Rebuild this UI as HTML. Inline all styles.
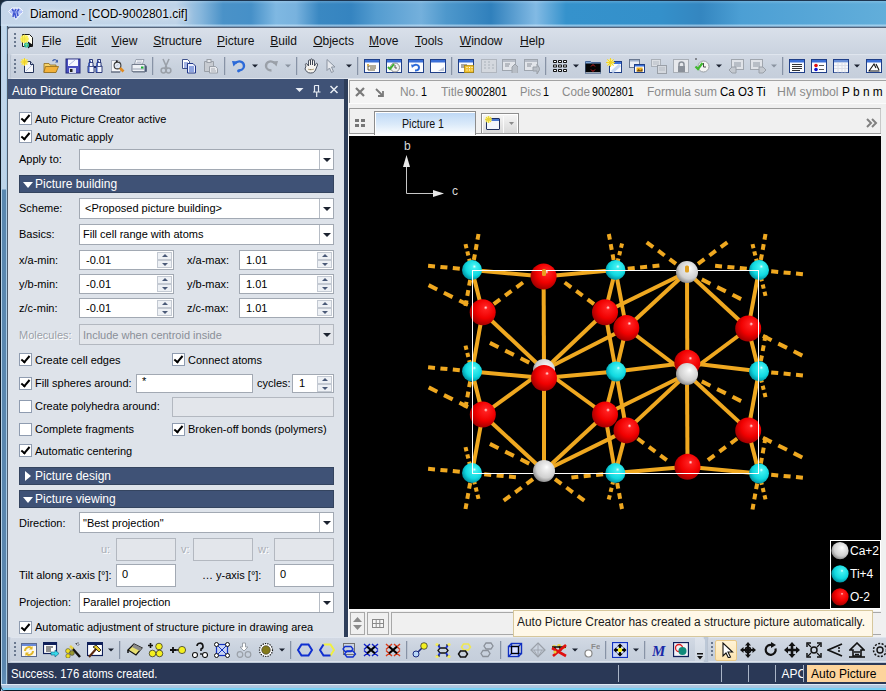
<!DOCTYPE html>
<html><head><meta charset="utf-8">
<style>
*{box-sizing:border-box;margin:0;padding:0}
html,body{width:886px;height:691px;overflow:hidden;background:#1a2a3a}
body{position:relative;font-family:"Liberation Sans",sans-serif;font-size:11px;color:#000}
.a{position:absolute}
.t{position:absolute;white-space:pre;line-height:1}
#title{left:0;top:0;width:886px;height:27px;border-top:1px solid #1d3550;border-left:1px solid #27415c;border-top-left-radius:7px;background:linear-gradient(180deg,rgba(255,255,255,0.18) 0,rgba(255,255,255,0) 3px,rgba(255,255,255,0) 23px,rgba(220,240,255,0.5) 24px,rgba(200,225,245,0.6) 25px,rgba(90,110,140,0.8) 26px),linear-gradient(90deg,#c6d7ea 0px,#bed3e8 175px,#86b6dc 200px,#4a92c8 222px,#4690c8 250px,#7fb8e2 275px,#78b2de 295px,#3a88c2 318px,#3584c0 350px,#549cd0 375px,#74b0dc 420px,#4e98cc 445px,#3080bc 490px,#82bae4 535px,#3592cc 565px,#3490ca 660px,#3486c0 700px,#4c9fd4 740px,#62aeda 886px)}
#frameL{left:0;top:26px;width:8px;height:665px;background:linear-gradient(90deg,#0c1622 0,#0c1622 1px,#b9d3e8 1px,#b9d3e8 2px,transparent 2px,transparent 6px,#a9cbe6 6px,#a9cbe6 7px,#4d5b6c 7px,#4d5b6c 8px),linear-gradient(180deg,#c3d8ec 0,#bcd3e8 163px,#5a88b0 164px,#5a86ae 640px,#6c9cc4 691px)}
#frameB{left:0;top:684px;width:886px;height:7px;background:linear-gradient(180deg,#dfeaf6 0,#dfeaf6 1px,#b4c8de 1px,#a4c4e2 4px,#78d0f4 4px,#78d0f4 6px,#0a1a26 6px);border-bottom-left-radius:6px;border-left:1px solid #0c1622}
#menubar{left:7px;top:27px;width:879px;height:27px;background:linear-gradient(180deg,#d9e0ea,#cad3df);border-top:1px solid #56667c;border-left:1px solid #56667c;border-top-left-radius:3px}
#tbarrow{left:8px;top:53px;width:878px;height:26px;background:#c9d2de}
.tb{position:absolute;border:1px solid #b9c3d1;border-top-color:#dfe5ee;border-bottom-color:#dde3ec;border-radius:3px;background:linear-gradient(180deg,#d2d9e4,#c9d2de 50%,#c5cedb)}
.grip{position:absolute;width:2px;height:14px;background:linear-gradient(180deg,#6a788e 2px,transparent 2px) 0 0/2px 4px}
.sep{position:absolute;width:1px;height:18px;background:#8793a6;border-right:1px solid rgba(240,244,250,0.5);box-sizing:content-box}
#panel{left:8px;top:79px;width:336px;height:558px;background:#dee3ea}
#phead{left:8px;top:79px;width:336px;height:20px;background:#3f5276}
.sh{position:absolute;left:19px;width:315px;height:18px;background:#3f5276;border:1px solid #34445f;color:#fff;font-size:12px}
.sh .tri{position:absolute;left:3px;top:6px;border-left:5px solid transparent;border-right:5px solid transparent;border-top:6px solid #fff}
.sh .tri.r{left:5px;top:3px;border-top:5px solid transparent;border-bottom:5px solid transparent;border-left:6px solid #fff;border-right:none}
.cb{position:absolute;width:13px;height:13px;background:#fff;border:1px solid #8f9cb0}
.cb.on::after{content:"";position:absolute;left:3px;top:0px;width:3px;height:7px;border:solid #000;border-width:0 2px 2px 0;transform:rotate(40deg)}
.ed{position:absolute;background:#fff;border:1px solid #a2a9b3}
.ed.dis{background:#e3e6eb;border-color:#b3b8c0}
.combo .btn{position:absolute;right:0;top:0;width:14px;height:100%;border-left:1px solid #b6bcc5}
.combo .btn::after{content:"";position:absolute;left:3px;top:8px;border-left:4px solid transparent;border-right:4px solid transparent;border-top:4px solid #1c2330}
.spin .btn{position:absolute;right:1px;top:1px;width:15px;height:16px}
.spin .btn i{position:absolute;left:0;width:15px;height:8px;background:#eef1f5;border:1px solid #c3c9d2}
.spin .btn i::after{content:"";position:absolute;left:4px;border-left:3px solid transparent;border-right:3px solid transparent}
.spin .btn i.u{top:0}.spin .btn i.u::after{top:1px;border-bottom:3px solid #4a5a78}
.spin .btn i.d{top:8px}.spin .btn i.d::after{top:2px;border-top:3px solid #4a5a78}
#split{left:344px;top:79px;width:4px;height:558px;background:#2e3e5a}
#right{left:348px;top:79px;width:538px;height:558px;background:#f0f0f0}
#canvas{left:349px;top:136px;width:532px;height:473px;background:#000}
#status{left:8px;top:663px;width:878px;height:21px;background:#2a3856;color:#fff}
.ss{position:absolute;top:2px;width:1px;height:17px;background:#9aa6b8}
</style></head><body>
<div id="title" class="a"></div>
<div id="frameL" class="a"></div>
<div id="frameB" class="a"></div>
<div id="menubar" class="a"></div>
<div id="tbarrow" class="a"></div>
<div id="panel" class="a"></div>
<div id="phead" class="a"></div>
<div id="split" class="a"></div>
<div id="right" class="a"></div>
<div id="canvas" class="a"></div>
<div id="status" class="a"></div>
<svg class="a" style="left:0;top:0" width="886" height="691" viewBox="0 0 886 691">
<defs><radialGradient id="gO" cx="0.58" cy="0.4" r="0.62" fx="0.62" fy="0.32"><stop offset="0" stop-color="#fff0f0"/><stop offset="0.12" stop-color="#ff2020"/><stop offset="0.6" stop-color="#f00000"/><stop offset="1" stop-color="#a00000"/></radialGradient><radialGradient id="gT" cx="0.58" cy="0.4" r="0.62" fx="0.62" fy="0.32"><stop offset="0" stop-color="#e8ffff"/><stop offset="0.15" stop-color="#40f0f0"/><stop offset="0.65" stop-color="#10d8e0"/><stop offset="1" stop-color="#0090a0"/></radialGradient><radialGradient id="gC" cx="0.58" cy="0.4" r="0.62" fx="0.62" fy="0.32"><stop offset="0" stop-color="#ffffff"/><stop offset="0.2" stop-color="#eeeeee"/><stop offset="0.7" stop-color="#d0d0d0"/><stop offset="1" stop-color="#8a8a8a"/></radialGradient><radialGradient id="gO2" href="#gO"/><radialGradient id="gT2" href="#gT"/><radialGradient id="gC2" href="#gC"/></defs><g stroke="#efa820" stroke-width="4"><line x1="472" y1="270" x2="543.6" y2="276.5"/><line x1="472" y1="270" x2="482.7" y2="312.2"/><line x1="615.5" y1="270" x2="626.3" y2="328"/><line x1="615.5" y1="270" x2="543.6" y2="276.5"/><line x1="615.5" y1="270" x2="605" y2="312.2"/><line x1="759" y1="270" x2="748.2" y2="328.5"/><line x1="472" y1="371.5" x2="544" y2="378"/><line x1="472" y1="371.5" x2="482.8" y2="414.5"/><line x1="472" y1="371.5" x2="482.7" y2="312.2"/><line x1="616" y1="371.5" x2="687.3" y2="362.8"/><line x1="616" y1="371.5" x2="626.3" y2="328"/><line x1="616" y1="371.5" x2="626.5" y2="430.4"/><line x1="616" y1="371.5" x2="544" y2="378"/><line x1="616" y1="371.5" x2="605" y2="414.5"/><line x1="616" y1="371.5" x2="605" y2="312.2"/><line x1="759" y1="371.2" x2="687.3" y2="362.8"/><line x1="759" y1="371.2" x2="748.2" y2="328.5"/><line x1="759" y1="371.2" x2="748.2" y2="430.4"/><line x1="472" y1="473" x2="482.8" y2="414.5"/><line x1="615.3" y1="473" x2="687.5" y2="466.8"/><line x1="615.3" y1="473" x2="626.5" y2="430.4"/><line x1="615.3" y1="473" x2="605" y2="414.5"/><line x1="759" y1="473.5" x2="687.5" y2="466.8"/><line x1="759" y1="473.5" x2="748.2" y2="430.4"/><line x1="687" y1="272" x2="687.3" y2="362.8"/><line x1="687" y1="272" x2="748.2" y2="328.5"/><line x1="687" y1="272" x2="626.3" y2="328"/><line x1="687" y1="272" x2="605" y2="312.2"/><line x1="544" y1="370" x2="544" y2="378"/><line x1="544" y1="370" x2="543.6" y2="276.5"/><line x1="544" y1="370" x2="482.7" y2="312.2"/><line x1="544" y1="370" x2="605" y2="312.2"/><line x1="544" y1="370" x2="626.3" y2="328"/><line x1="544" y1="370" x2="482.8" y2="414.5"/><line x1="544" y1="370" x2="605" y2="414.5"/><line x1="687" y1="374" x2="687.3" y2="362.8"/><line x1="687" y1="374" x2="687.5" y2="466.8"/><line x1="687" y1="374" x2="748.2" y2="430.4"/><line x1="687" y1="374" x2="626.5" y2="430.4"/><line x1="687" y1="374" x2="605" y2="414.5"/><line x1="687" y1="374" x2="748.2" y2="328.5"/><line x1="687" y1="374" x2="626.3" y2="328"/><line x1="544" y1="471" x2="544" y2="378"/><line x1="544" y1="471" x2="482.8" y2="414.5"/><line x1="544" y1="471" x2="605" y2="414.5"/><line x1="544" y1="471" x2="626.5" y2="430.4"/></g><g stroke="#efa820" stroke-width="4"><line x1="477.5" y1="239.7" x2="478.5" y2="234.0"/><line x1="475.7" y1="249.8" x2="476.7" y2="244.1"/><line x1="473.8" y1="260.0" x2="474.9" y2="254.3"/><line x1="435.0" y1="266.4" x2="428.1" y2="265.7"/><line x1="447.4" y1="267.6" x2="440.4" y2="266.9"/><line x1="459.8" y1="268.8" x2="452.8" y2="268.1"/><line x1="466.5" y1="248.2" x2="465.5" y2="244.1"/><line x1="468.3" y1="255.5" x2="467.3" y2="251.4"/><line x1="470.2" y1="262.8" x2="469.1" y2="258.7"/><line x1="466.5" y1="300.3" x2="465.5" y2="306.0"/><line x1="468.3" y1="290.2" x2="467.3" y2="295.9"/><line x1="470.2" y1="280.0" x2="469.1" y2="285.7"/><line x1="652.5" y1="266.2" x2="659.4" y2="265.4"/><line x1="640.1" y1="267.4" x2="647.1" y2="266.7"/><line x1="627.7" y1="268.7" x2="634.7" y2="268.0"/><line x1="621.0" y1="247.8" x2="622.1" y2="243.6"/><line x1="619.2" y1="255.2" x2="620.2" y2="251.1"/><line x1="617.3" y1="262.7" x2="618.4" y2="258.5"/><line x1="609.9" y1="239.7" x2="608.8" y2="234.0"/><line x1="611.7" y1="249.8" x2="610.7" y2="244.1"/><line x1="613.6" y1="260.0" x2="612.6" y2="254.3"/><line x1="796.0" y1="273.6" x2="802.9" y2="274.3"/><line x1="783.6" y1="272.4" x2="790.6" y2="273.1"/><line x1="771.2" y1="271.2" x2="778.2" y2="271.9"/><line x1="764.5" y1="291.8" x2="765.5" y2="295.9"/><line x1="762.7" y1="284.5" x2="763.7" y2="288.6"/><line x1="760.8" y1="277.2" x2="761.9" y2="281.3"/><line x1="764.5" y1="239.7" x2="765.5" y2="234.0"/><line x1="762.7" y1="249.8" x2="763.7" y2="244.1"/><line x1="760.8" y1="260.0" x2="761.9" y2="254.3"/><line x1="722.0" y1="266.4" x2="715.1" y2="265.7"/><line x1="734.4" y1="267.6" x2="727.4" y2="266.9"/><line x1="746.8" y1="268.8" x2="739.8" y2="268.1"/><line x1="753.5" y1="248.2" x2="752.5" y2="244.1"/><line x1="755.3" y1="255.5" x2="754.3" y2="251.4"/><line x1="757.2" y1="262.8" x2="756.1" y2="258.7"/><line x1="435.0" y1="367.9" x2="428.1" y2="367.2"/><line x1="447.4" y1="369.1" x2="440.4" y2="368.4"/><line x1="459.8" y1="370.3" x2="452.8" y2="369.6"/><line x1="466.5" y1="349.7" x2="465.5" y2="345.6"/><line x1="468.3" y1="357.0" x2="467.3" y2="352.9"/><line x1="470.2" y1="364.3" x2="469.1" y2="360.2"/><line x1="466.5" y1="401.8" x2="465.5" y2="407.5"/><line x1="468.3" y1="391.7" x2="467.3" y2="397.4"/><line x1="470.2" y1="381.5" x2="469.1" y2="387.2"/><line x1="796.0" y1="374.8" x2="802.9" y2="375.5"/><line x1="783.6" y1="373.6" x2="790.6" y2="374.3"/><line x1="771.2" y1="372.4" x2="778.2" y2="373.1"/><line x1="764.5" y1="393.0" x2="765.5" y2="397.1"/><line x1="762.7" y1="385.7" x2="763.7" y2="389.8"/><line x1="760.8" y1="378.4" x2="761.9" y2="382.5"/><line x1="764.5" y1="340.9" x2="765.5" y2="335.2"/><line x1="762.7" y1="351.0" x2="763.7" y2="345.3"/><line x1="760.8" y1="361.2" x2="761.9" y2="355.5"/><line x1="509.0" y1="476.6" x2="515.9" y2="477.3"/><line x1="496.6" y1="475.4" x2="503.6" y2="476.1"/><line x1="484.2" y1="474.2" x2="491.2" y2="474.9"/><line x1="477.5" y1="494.8" x2="478.5" y2="498.9"/><line x1="475.7" y1="487.5" x2="476.7" y2="491.6"/><line x1="473.8" y1="480.2" x2="474.9" y2="484.3"/><line x1="435.0" y1="469.4" x2="428.1" y2="468.7"/><line x1="447.4" y1="470.6" x2="440.4" y2="469.9"/><line x1="459.8" y1="471.8" x2="452.8" y2="471.1"/><line x1="466.5" y1="451.2" x2="465.5" y2="447.1"/><line x1="468.3" y1="458.5" x2="467.3" y2="454.4"/><line x1="470.2" y1="465.8" x2="469.1" y2="461.7"/><line x1="466.5" y1="503.3" x2="465.5" y2="509.0"/><line x1="468.3" y1="493.2" x2="467.3" y2="498.9"/><line x1="470.2" y1="483.0" x2="469.1" y2="488.7"/><line x1="620.9" y1="503.3" x2="622.0" y2="509.0"/><line x1="619.1" y1="493.2" x2="620.1" y2="498.9"/><line x1="617.2" y1="483.0" x2="618.2" y2="488.7"/><line x1="578.3" y1="476.8" x2="571.4" y2="477.6"/><line x1="590.7" y1="475.6" x2="583.7" y2="476.3"/><line x1="603.1" y1="474.3" x2="596.1" y2="475.0"/><line x1="609.8" y1="495.2" x2="608.7" y2="499.4"/><line x1="611.6" y1="487.8" x2="610.6" y2="491.9"/><line x1="613.5" y1="480.3" x2="612.4" y2="484.5"/><line x1="796.0" y1="477.1" x2="802.9" y2="477.8"/><line x1="783.6" y1="475.9" x2="790.6" y2="476.6"/><line x1="771.2" y1="474.7" x2="778.2" y2="475.4"/><line x1="764.5" y1="495.3" x2="765.5" y2="499.4"/><line x1="762.7" y1="488.0" x2="763.7" y2="492.1"/><line x1="760.8" y1="480.7" x2="761.9" y2="484.8"/><line x1="764.5" y1="443.2" x2="765.5" y2="437.5"/><line x1="762.7" y1="453.3" x2="763.7" y2="447.6"/><line x1="760.8" y1="463.5" x2="761.9" y2="457.8"/><line x1="753.5" y1="503.8" x2="752.5" y2="509.5"/><line x1="755.3" y1="493.7" x2="754.3" y2="499.4"/><line x1="757.2" y1="483.5" x2="756.1" y2="489.2"/><line x1="687.0" y1="267.6" x2="687.0" y2="266.7"/><line x1="687.0" y1="269.1" x2="687.0" y2="268.2"/><line x1="687.0" y1="270.6" x2="687.0" y2="269.7"/><line x1="732.5" y1="294.7" x2="741.1" y2="299.1"/><line x1="717.1" y1="287.1" x2="725.8" y2="291.4"/><line x1="701.8" y1="279.4" x2="710.4" y2="283.7"/><line x1="720.8" y1="247.1" x2="727.3" y2="242.3"/><line x1="709.4" y1="255.5" x2="715.8" y2="250.7"/><line x1="698.0" y1="263.9" x2="704.4" y2="259.1"/><line x1="653.2" y1="247.1" x2="646.7" y2="242.3"/><line x1="664.6" y1="255.5" x2="658.2" y2="250.7"/><line x1="676.0" y1="263.9" x2="669.6" y2="259.1"/><line x1="498.5" y1="347.3" x2="489.9" y2="342.9"/><line x1="513.9" y1="354.9" x2="505.2" y2="350.6"/><line x1="529.2" y1="362.6" x2="520.6" y2="358.3"/><line x1="732.5" y1="396.7" x2="741.1" y2="401.1"/><line x1="717.1" y1="389.1" x2="725.8" y2="393.4"/><line x1="701.8" y1="381.4" x2="710.4" y2="385.7"/><line x1="544.0" y1="475.4" x2="544.0" y2="476.3"/><line x1="544.0" y1="473.9" x2="544.0" y2="474.8"/><line x1="544.0" y1="472.4" x2="544.0" y2="473.3"/><line x1="498.5" y1="448.3" x2="489.9" y2="443.9"/><line x1="513.9" y1="455.9" x2="505.2" y2="451.6"/><line x1="529.2" y1="463.6" x2="520.6" y2="459.3"/><line x1="510.2" y1="495.9" x2="503.7" y2="500.7"/><line x1="521.6" y1="487.5" x2="515.2" y2="492.3"/><line x1="533.0" y1="479.1" x2="526.6" y2="483.9"/><line x1="577.8" y1="495.9" x2="584.3" y2="500.7"/><line x1="566.4" y1="487.5" x2="572.8" y2="492.3"/><line x1="555.0" y1="479.1" x2="561.4" y2="483.9"/><line x1="543.6" y1="272.1" x2="543.6" y2="271.2"/><line x1="543.6" y1="273.6" x2="543.6" y2="272.7"/><line x1="543.6" y1="275.1" x2="543.6" y2="274.2"/><line x1="437.2" y1="289.5" x2="428.6" y2="285.1"/><line x1="452.6" y1="297.1" x2="443.9" y2="292.8"/><line x1="467.9" y1="304.8" x2="459.3" y2="300.5"/><line x1="516.5" y1="287.3" x2="523.0" y2="282.5"/><line x1="505.1" y1="295.7" x2="511.5" y2="290.9"/><line x1="493.7" y1="304.1" x2="500.1" y2="299.3"/><line x1="571.2" y1="287.3" x2="564.7" y2="282.5"/><line x1="582.6" y1="295.7" x2="576.2" y2="290.9"/><line x1="594.0" y1="304.1" x2="587.6" y2="299.3"/><line x1="793.7" y1="351.2" x2="802.3" y2="355.6"/><line x1="778.3" y1="343.6" x2="787.0" y2="347.9"/><line x1="763.0" y1="335.9" x2="771.6" y2="340.2"/><line x1="437.3" y1="391.8" x2="428.7" y2="387.4"/><line x1="452.7" y1="399.4" x2="444.0" y2="395.1"/><line x1="468.0" y1="407.1" x2="459.4" y2="402.8"/><line x1="660.3" y1="455.3" x2="666.8" y2="460.1"/><line x1="648.9" y1="446.9" x2="655.3" y2="451.7"/><line x1="637.5" y1="438.5" x2="643.9" y2="443.3"/><line x1="714.4" y1="455.3" x2="707.9" y2="460.1"/><line x1="725.8" y1="446.9" x2="719.4" y2="451.7"/><line x1="737.2" y1="438.5" x2="730.8" y2="443.3"/><line x1="793.7" y1="453.1" x2="802.3" y2="457.5"/><line x1="778.3" y1="445.5" x2="787.0" y2="449.8"/><line x1="763.0" y1="437.8" x2="771.6" y2="442.1"/><line x1="687.5" y1="471.2" x2="687.5" y2="472.1"/><line x1="687.5" y1="469.7" x2="687.5" y2="470.6"/><line x1="687.5" y1="468.2" x2="687.5" y2="469.1"/></g><circle cx="544" cy="370" r="11" fill="url(#gC)"/><circle cx="605" cy="312.2" r="13" fill="url(#gO)"/><circle cx="605" cy="414.5" r="13" fill="url(#gO)"/><circle cx="472" cy="270" r="10" fill="url(#gT)"/><circle cx="615.5" cy="270" r="10" fill="url(#gT)"/><circle cx="759" cy="270" r="10" fill="url(#gT)"/><circle cx="472" cy="371.5" r="10" fill="url(#gT)"/><circle cx="616" cy="371.5" r="10" fill="url(#gT)"/><circle cx="759" cy="371.2" r="10" fill="url(#gT)"/><circle cx="472" cy="473" r="10" fill="url(#gT)"/><circle cx="615.3" cy="473" r="10" fill="url(#gT)"/><circle cx="759" cy="473.5" r="10" fill="url(#gT)"/><circle cx="543.6" cy="276.5" r="13" fill="url(#gO)"/><circle cx="482.7" cy="312.2" r="13" fill="url(#gO)"/><circle cx="626.3" cy="328" r="13" fill="url(#gO)"/><circle cx="748.2" cy="328.5" r="13" fill="url(#gO)"/><circle cx="544" cy="378" r="13" fill="url(#gO)"/><circle cx="687.3" cy="362.8" r="13" fill="url(#gO)"/><circle cx="482.8" cy="414.5" r="13" fill="url(#gO)"/><circle cx="626.5" cy="430.4" r="13" fill="url(#gO)"/><circle cx="748.2" cy="430.4" r="13" fill="url(#gO)"/><circle cx="687.5" cy="466.8" r="13" fill="url(#gO)"/><rect x="472.5" y="270.5" width="286" height="203" fill="none" stroke="#ffffff" stroke-width="1"/><rect x="542" y="269" width="4" height="7" rx="1.5" fill="#e8a020"/><circle cx="687" cy="272" r="11" fill="url(#gC)"/><circle cx="687" cy="374" r="11" fill="url(#gC)"/><circle cx="544" cy="471" r="11" fill="url(#gC)"/><rect x="685" y="265.5" width="4" height="7" rx="1.5" fill="#e0a020"/>
</svg>
<svg class="a" style="left:390px;top:136px" width="80" height="64"><path d="M16.5 57.5V28M16.5 57.5H45" stroke="#c8c8c8" stroke-width="1" fill="none"/><path d="M13 31l3.5-12 3.5 12z" fill="#e8e8e8"/><path d="M43 54l11 3.5-11 3.5z" fill="#e8e8e8"/><text x="14" y="14" font-size="12" fill="#d8d8d8" font-family="Liberation Sans">b</text><text x="62" y="59" font-size="12" fill="#d8d8d8" font-family="Liberation Sans">c</text></svg>
<div class="t" style="left:12px;top:85px;font-size:12px;color:#fff;">Auto Picture Creator</div><svg class="a" style="left:290px;top:82px" width="54" height="16"><path d="M5.5 6h8l-4 4z" fill="#e8edf4"/><path d="M24.5 3.5h4v6M24.5 3.5v6M23 10h7.5M26.7 10v5" stroke="#e8edf4" stroke-width="1.2" fill="none"/><path d="M40.5 4l7 7M47.5 4l-7 7" stroke="#e8edf4" stroke-width="1.5"/></svg><div class="cb on" style="left:19px;top:112px"></div><div class="t" style="left:35px;top:114px;font-size:11px;color:#000;">Auto Picture Creator active</div><div class="cb on" style="left:19px;top:130px"></div><div class="t" style="left:35px;top:132px;font-size:11px;color:#000;">Automatic apply</div><div class="t" style="left:19px;top:154px;font-size:11px;color:#000;">Apply to:</div><div class="ed combo" style="left:79px;top:149px;width:255px;height:21px"><div class="btn"></div></div><div class="sh" style="top:175px"><i class="tri"></i></div><div class="t" style="left:35px;top:178px;font-size:12px;color:#fff;">Picture building</div><div class="t" style="left:19px;top:203px;font-size:11px;color:#000;">Scheme:</div><div class="ed combo" style="left:79px;top:198px;width:255px;height:21px"><div class="btn"></div></div><div class="t" style="left:85px;top:203px;font-size:11px;color:#000;">&lt;Proposed picture building&gt;</div><div class="t" style="left:19px;top:229px;font-size:11px;color:#000;">Basics:</div><div class="ed combo" style="left:79px;top:224px;width:255px;height:21px"><div class="btn"></div></div><div class="t" style="left:83px;top:229px;font-size:11px;color:#000;">Fill cell range with atoms</div><div class="t" style="left:19px;top:255px;font-size:11px;color:#000;">x/a-min:</div><div class="ed spin" style="left:79px;top:250px;width:95px;height:20px"><div class="btn"><i class="u"></i><i class="d"></i></div></div><div class="t" style="left:86px;top:255px;font-size:11px;color:#000;">-0.01</div><div class="t" style="left:187px;top:255px;font-size:11px;color:#000;">x/a-max:</div><div class="ed spin" style="left:239px;top:250px;width:95px;height:20px"><div class="btn"><i class="u"></i><i class="d"></i></div></div><div class="t" style="left:246px;top:255px;font-size:11px;color:#000;">1.01</div><div class="t" style="left:19px;top:279px;font-size:11px;color:#000;">y/b-min:</div><div class="ed spin" style="left:79px;top:274px;width:95px;height:20px"><div class="btn"><i class="u"></i><i class="d"></i></div></div><div class="t" style="left:86px;top:279px;font-size:11px;color:#000;">-0.01</div><div class="t" style="left:187px;top:279px;font-size:11px;color:#000;">y/b-max:</div><div class="ed spin" style="left:239px;top:274px;width:95px;height:20px"><div class="btn"><i class="u"></i><i class="d"></i></div></div><div class="t" style="left:246px;top:279px;font-size:11px;color:#000;">1.01</div><div class="t" style="left:19px;top:303px;font-size:11px;color:#000;">z/c-min:</div><div class="ed spin" style="left:79px;top:298px;width:95px;height:20px"><div class="btn"><i class="u"></i><i class="d"></i></div></div><div class="t" style="left:86px;top:303px;font-size:11px;color:#000;">-0.01</div><div class="t" style="left:187px;top:303px;font-size:11px;color:#000;">z/c-max:</div><div class="ed spin" style="left:239px;top:298px;width:95px;height:20px"><div class="btn"><i class="u"></i><i class="d"></i></div></div><div class="t" style="left:246px;top:303px;font-size:11px;color:#000;">1.01</div><div class="t" style="left:19px;top:330px;font-size:11px;color:#9aa0a8;text-shadow:1px 1px 0 #fff">Molecules:</div><div class="ed combo dis" style="left:79px;top:324px;width:255px;height:21px"><div class="btn"></div></div><div class="t" style="left:83px;top:330px;font-size:11px;color:#8a8f98;">Include when centroid inside</div><div class="cb on" style="left:19px;top:353px"></div><div class="t" style="left:35px;top:355px;font-size:11px;color:#000;">Create cell edges</div><div class="cb on" style="left:172px;top:353px"></div><div class="t" style="left:188px;top:355px;font-size:11px;color:#000;">Connect atoms</div><div class="cb on" style="left:19px;top:377px"></div><div class="t" style="left:35px;top:378px;font-size:11px;color:#000;">Fill spheres around:</div><div class="ed" style="left:136px;top:374px;width:117px;height:19px"></div><div class="t" style="left:142px;top:376px;font-size:11px;color:#000;">*</div><div class="t" style="left:257px;top:378px;font-size:11px;color:#000;">cycles:</div><div class="ed spin" style="left:292px;top:374px;width:42px;height:19px"><div class="btn"><i class="u"></i><i class="d"></i></div></div><div class="t" style="left:299px;top:378px;font-size:11px;color:#000;">1</div><div class="cb" style="left:19px;top:400px"></div><div class="t" style="left:35px;top:401px;font-size:11px;color:#000;">Create polyhedra around:</div><div class="ed dis" style="left:172px;top:397px;width:162px;height:20px"></div><div class="cb" style="left:19px;top:423px"></div><div class="t" style="left:35px;top:424px;font-size:11px;color:#000;">Complete fragments</div><div class="cb on" style="left:172px;top:423px"></div><div class="t" style="left:188px;top:424px;font-size:11px;color:#000;">Broken-off bonds (polymers)</div><div class="cb on" style="left:19px;top:444px"></div><div class="t" style="left:35px;top:446px;font-size:11px;color:#000;">Automatic centering</div><div class="sh" style="top:467px"><i class="tri r"></i></div><div class="t" style="left:35px;top:470px;font-size:12px;color:#fff;">Picture design</div><div class="sh" style="top:490px"><i class="tri"></i></div><div class="t" style="left:35px;top:493px;font-size:12px;color:#fff;">Picture viewing</div><div class="t" style="left:19px;top:518px;font-size:11px;color:#000;">Direction:</div><div class="ed combo" style="left:79px;top:512px;width:255px;height:21px"><div class="btn"></div></div><div class="t" style="left:83px;top:518px;font-size:11px;color:#000;">"Best projection"</div><div class="t" style="left:101px;top:544px;font-size:11px;color:#a8adb5;text-shadow:1px 1px 0 #fff">u:</div><div class="ed dis" style="left:116px;top:538px;width:60px;height:23px"></div><div class="t" style="left:181px;top:544px;font-size:11px;color:#a8adb5;text-shadow:1px 1px 0 #fff">v:</div><div class="ed dis" style="left:193px;top:538px;width:60px;height:23px"></div><div class="t" style="left:258px;top:544px;font-size:11px;color:#a8adb5;text-shadow:1px 1px 0 #fff">w:</div><div class="ed dis" style="left:274px;top:538px;width:60px;height:23px"></div><div class="t" style="left:19px;top:570px;font-size:11px;color:#000;">Tilt along x-axis [°]:</div><div class="ed" style="left:116px;top:564px;width:60px;height:23px"></div><div class="t" style="left:122px;top:569px;font-size:11px;color:#000;">0</div><div class="t" style="left:202px;top:570px;font-size:11px;color:#000;">… y-axis [°]:</div><div class="ed" style="left:274px;top:564px;width:60px;height:23px"></div><div class="t" style="left:280px;top:569px;font-size:11px;color:#000;">0</div><div class="t" style="left:19px;top:597px;font-size:11px;color:#000;">Projection:</div><div class="ed combo" style="left:79px;top:592px;width:255px;height:21px"><div class="btn"></div></div><div class="t" style="left:83px;top:597px;font-size:11px;color:#000;">Parallel projection</div><div class="cb on" style="left:19px;top:621px"></div><div class="t" style="left:35px;top:622px;font-size:11px;color:#000;">Automatic adjustment of structure picture in drawing area</div><div class="tb" style="left:10px;top:54px;width:890px;height:25px"></div><div class="grip" style="left:14px;top:59px"></div><svg class="a" style="left:20px;top:58px" width="16" height="16" viewBox="0 0 16 16"><path d="M4.5 3.5h6l3 3v8h-9z" fill="#f4f6fa" stroke="#23325a"/><path d="M10.5 3.5v3h3" fill="#c8d2e6" stroke="#23325a"/><path d="M6 13l6-6" stroke="#b8c4dc"/><circle cx="4.5" cy="4" r="3.2" fill="#fff26a" opacity="0.9"/><path d="M4.5 0v8M0.5 4h8M1.8 1.3l5.4 5.4M7.2 1.3l-5.4 5.4" stroke="#f0d020" stroke-width="0.9"/></svg><svg class="a" style="left:43px;top:58px" width="16" height="16" viewBox="0 0 16 16"><path d="M1 5.5h5l1 1.5h6v7H1z" fill="#f6d36a" stroke="#8f6a1a" stroke-width="0.8"/><path d="M2.5 8.5h13l-2.5 6H0.8z" fill="#f3b23a" stroke="#8f6a1a" stroke-width="0.8"/><path d="M9.5 3c2-2 4-1.5 5 0.5" stroke="#3f5fa8" stroke-width="1.2" fill="none"/><path d="M15 1.5v3h-3z" fill="#3f5fa8"/></svg><svg class="a" style="left:65px;top:58px" width="16" height="16" viewBox="0 0 16 16"><rect x="1" y="1" width="14" height="14" fill="#4a4fc0" stroke="#232a78"/><rect x="3" y="1.5" width="10" height="6.5" fill="#f6f8ff"/><path d="M4 7l6-5" stroke="#b0b8e0"/><rect x="4" y="10" width="7" height="5" fill="#d8dcf0"/><rect x="5" y="11" width="2.5" height="3" fill="#222"/></svg><svg class="a" style="left:87px;top:58px" width="16" height="16" viewBox="0 0 16 16"><path d="M2.5 1.5h3v3h0.5v3.5h1v6.5H1v-6.5h1v-3.5h0.5z" fill="#f4f7ff" stroke="#1c2a70" stroke-width="0.9"/><path d="M10.5 1.5h3v3h0.5v3.5h1v6.5H9v-6.5h1v-3.5h0.5z" fill="#f4f7ff" stroke="#1c2a70" stroke-width="0.9"/><path d="M3.2 2.5v2M11.2 2.5v2M2.2 5v3M10.2 5v3M1.8 9v5M9.8 9v5" stroke="#3050b8" stroke-width="1.3"/><path d="M7 9h2" stroke="#1c2a70" stroke-width="2"/><path d="M1.5 8.5h5M9.5 8.5h5M2 4.5h4M10 4.5h4" stroke="#1c2a70" stroke-width="0.8"/></svg><svg class="a" style="left:110px;top:58px" width="16" height="16" viewBox="0 0 16 16"><path d="M1.5 2.5h7l2 2v9.5h-9z" fill="#f6f7fa" stroke="#9aa2b2" stroke-width="0.8"/><path d="M1 14h9" stroke="#5a6478" stroke-width="1.2"/><circle cx="7.5" cy="7.5" r="3.4" fill="#e4eaf4" stroke="#3a3a3a" stroke-width="1.1"/><path d="M6 8.5l2.5-2.5" stroke="#b8c4d8"/><circle cx="6.8" cy="3.3" r="1" fill="#222"/><path d="M10 10l3.5 3.5" stroke="#e08a20" stroke-width="2.6"/></svg><svg class="a" style="left:131px;top:58px" width="16" height="16" viewBox="0 0 16 16"><path d="M5 1.5h8l-1.5 4.5h-8z" fill="#fafbfd" stroke="#8a93a3" stroke-width="0.8"/><path d="M6 3h5M5.5 4.5h5" stroke="#b0b8c8" stroke-width="0.8"/><path d="M1 6.5h13l1.5 2v5H1z" fill="#eef1f6" stroke="#6a7384" stroke-width="0.9"/><path d="M13.5 6.5l2 2v5h-2z" fill="#4a5a78"/><path d="M1.5 11h12" stroke="#9aa3b3"/><rect x="10" y="8.5" width="2.5" height="2" fill="#16b030"/><path d="M2 14h12" stroke="#7a8394" stroke-width="1.2"/></svg><div class="sep" style="left:152.0px;top:57px"></div><svg class="a" style="left:158px;top:58px" width="16" height="16" viewBox="0 0 16 16"><path d="M5 1l4 9M11 1L7 10" stroke="#9aa0a8" stroke-width="1.6"/><circle cx="5.5" cy="12.5" r="2.4" fill="none" stroke="#9aa0a8" stroke-width="1.5"/><circle cx="10.5" cy="12.5" r="2.4" fill="none" stroke="#9aa0a8" stroke-width="1.5"/></svg><svg class="a" style="left:181px;top:58px" width="16" height="16" viewBox="0 0 16 16"><path d="M1.5 1.5h5l2 2v7h-7z" fill="#fff" stroke="#2b3f80" stroke-width="0.9"/><path d="M3 5h4M3 7h4M3 9h3" stroke="#4a6ac8"/><path d="M6.5 5.5h5.5l2.5 2.5v7h-8z" fill="#eef2ff" stroke="#1f3688"/><path d="M8 9h5M8 11h5M8 13h5" stroke="#2e56c0"/></svg><svg class="a" style="left:203px;top:58px" width="16" height="16" viewBox="0 0 16 16"><path d="M1.5 3.5h9v10h-9z" fill="#c8ccd2" stroke="#9aa0a8"/><rect x="4" y="1.5" width="4" height="3" fill="#e6e8ec" stroke="#9aa0a8"/><path d="M6.5 8.5h6l2 2v4.5h-8z" fill="#e8eaee" stroke="#9aa0a8"/><path d="M8 11h4M8 13h5" stroke="#a8adb5"/></svg><div class="sep" style="left:224.0px;top:57px"></div><svg class="a" style="left:231px;top:58px" width="16" height="16" viewBox="0 0 16 16"><path d="M4 5.5c3-3.5 9-2.5 9 2.5 0 3-3 4.5-5.5 4.5" stroke="#2c6ad8" stroke-width="2.4" fill="none"/><path d="M1 3l6 0.5-4.5 5z" fill="#2c6ad8"/><circle cx="7.5" cy="13" r="1.4" fill="#2c6ad8"/></svg><svg class="a" style="left:252px;top:58px" width="16" height="16" viewBox="0 0 16 16"><path d="M0 6.5h6l-3 3z" fill="#1b2230"/></svg><svg class="a" style="left:263px;top:58px" width="16" height="16" viewBox="0 0 16 16"><path d="M12 5.5c-3-3.5-9-2.5-9 2.5 0 3 3 4.5 5.5 4.5" stroke="#9aa0a8" stroke-width="2.4" fill="none"/><path d="M15 3l-6 0.5 4.5 5z" fill="#9aa0a8"/></svg><svg class="a" style="left:285px;top:58px" width="16" height="16" viewBox="0 0 16 16"><path d="M0 6.5h6l-3 3z" fill="#8a93a0"/></svg><div class="sep" style="left:296.0px;top:57px"></div><svg class="a" style="left:303px;top:58px" width="16" height="16" viewBox="0 0 16 16"><path d="M3 8c-1.5-2 0-3 1-2l1.5 2V3c0-1.5 2-1.5 2 0v4V2c0-1.5 2-1.5 2 0v5V3c0-1.5 2-1.5 2 0v5l1-2c1-1.5 2.5-0.5 2 1l-2 5c-1 2-2 3-5 3-3 0-4-1.5-5.5-4z" fill="#f4f2ee" stroke="#3a4250" stroke-width="0.9"/><path d="M5 11c1 1 4 1 6 0" stroke="#c8b890"/></svg><svg class="a" style="left:323px;top:58px" width="16" height="16" viewBox="0 0 16 16"><path d="M4 1.5v11l2.5-2.5 2 4.5 2-1-2-4.5h3.5z" fill="#e6e9ee" stroke="#8a93a0"/></svg><svg class="a" style="left:345.5px;top:58px" width="16" height="16" viewBox="0 0 16 16"><path d="M0 6.5h6l-3 3z" fill="#1b2230"/></svg><div class="sep" style="left:357.0px;top:57px"></div><svg class="a" style="left:364px;top:58px" width="16" height="16" viewBox="0 0 16 16"><rect x="0.5" y="1.5" width="15" height="13" fill="#fbfcfe" stroke="#1f3f88"/><rect x="1" y="2" width="14" height="2.5" fill="#3a6fd8"/><path d="M4 6v6h7M4 8h8M6 10h6" stroke="#5a4a20" stroke-width="0.9" fill="none"/><rect x="3" y="6" width="2" height="2" fill="#d8b050"/></svg><svg class="a" style="left:386px;top:58px" width="16" height="16" viewBox="0 0 16 16"><rect x="0.5" y="1.5" width="15" height="13" fill="#fbfcfe" stroke="#1f3f88"/><rect x="1" y="2" width="14" height="2.5" fill="#3a6fd8"/><circle cx="9" cy="9.5" r="4.5" fill="#f0f0f0" stroke="#8a8a8a"/><path d="M9 7v3h2" stroke="#555" fill="none"/><path d="M2 9l2 2 4-5" stroke="#3cb030" stroke-width="2" fill="none"/></svg><svg class="a" style="left:408px;top:58px" width="16" height="16" viewBox="0 0 16 16"><rect x="0.5" y="1.5" width="15" height="13" fill="#fbfcfe" stroke="#1f3f88"/><rect x="1" y="2" width="14" height="2.5" fill="#3a6fd8"/><path d="M5 8c2-2 6-1.5 6 1.5 0 2-2 3-4 3" stroke="#2c6ad8" stroke-width="2" fill="none"/><path d="M3 6.5l4 0.5-3 3z" fill="#2c6ad8"/></svg><svg class="a" style="left:430px;top:58px" width="16" height="16" viewBox="0 0 16 16"><rect x="0.5" y="1.5" width="15" height="13" fill="#fbfcfe" stroke="#1f3f88"/><rect x="1" y="2" width="14" height="2.5" fill="#3a6fd8"/><path d="M8 13l6-4v4z" fill="#c0c8d8"/></svg><div class="sep" style="left:451.0px;top:57px"></div><svg class="a" style="left:458px;top:58px" width="16" height="16" viewBox="0 0 16 16"><rect x="0.5" y="1.5" width="15" height="13" fill="#fbfcfe" stroke="#1f3f88"/><rect x="1" y="2" width="14" height="2.5" fill="#3a6fd8"/><path d="M3 7h6M3 9h5" stroke="#555"/><rect x="6.5" y="7.5" width="9" height="7" fill="#f2c230" stroke="#b08a10" stroke-width="0.8"/><path d="M8.5 9.5h1M11 9.5h1M13.5 9.5h1M8.5 12h1M11 12h1M13.5 12h1" stroke="#fff" stroke-width="1.2"/></svg><svg class="a" style="left:480.5px;top:58px" width="16" height="16" viewBox="0 0 16 16"><rect x="0.5" y="1.5" width="15" height="13" fill="#d4d8de" stroke="#b0b6bf"/><path d="M3 4h2M7 4h2M3 7h2M7 7h2M11 7h2M3 10h2M7 10h2M11 10h2" stroke="#b8bec6" stroke-width="1.5"/></svg><svg class="a" style="left:502px;top:58px" width="16" height="16" viewBox="0 0 16 16"><rect x="0.5" y="1.5" width="13" height="11" fill="#e2e5ea" stroke="#9ea5ae"/><rect x="1" y="2" width="12" height="2" fill="#b8bec8"/><path d="M3 6h5M3 8h4" stroke="#8a9099"/><path d="M10 15V9l3-3 3 3v6" fill="#b8bec6" stroke="#9aa0a8"/></svg><svg class="a" style="left:524px;top:58px" width="16" height="16" viewBox="0 0 16 16"><rect x="0.5" y="1.5" width="13" height="11" fill="#e2e5ea" stroke="#9ea5ae"/><rect x="1" y="2" width="12" height="2" fill="#b8bec8"/><path d="M3 6h5M3 8h4" stroke="#8a9099"/><path d="M9 9h4v-3l3 5-3 5v-3H9z" fill="#b8bec6" stroke="#9aa0a8"/></svg><div class="sep" style="left:545.0px;top:57px"></div><svg class="a" style="left:552px;top:58px" width="16" height="16" viewBox="0 0 16 16"><g fill="#111"><rect x="1" y="2" width="4" height="3" rx="0.8"/><rect x="6" y="2" width="4" height="3" rx="0.8"/><rect x="11" y="2" width="4" height="3" rx="0.8"/><rect x="1" y="6.5" width="4" height="3" rx="0.8"/><rect x="6" y="6.5" width="4" height="3" rx="0.8"/><rect x="11" y="6.5" width="4" height="3" rx="0.8"/><rect x="1" y="11" width="4" height="3" rx="0.8"/><rect x="6" y="11" width="4" height="3" rx="0.8"/><rect x="11" y="11" width="4" height="3" rx="0.8"/></g><g fill="#fff"><rect x="2" y="3" width="2" height="1"/><rect x="7" y="3" width="2" height="1"/><rect x="12" y="3" width="2" height="1"/><rect x="2" y="7.5" width="2" height="1"/><rect x="7" y="7.5" width="2" height="1"/><rect x="12" y="7.5" width="2" height="1"/><rect x="2" y="12" width="2" height="1"/><rect x="7" y="12" width="2" height="1"/><rect x="12" y="12" width="2" height="1"/></g></svg><svg class="a" style="left:573px;top:58px" width="16" height="16" viewBox="0 0 16 16"><path d="M0 6.5h6l-3 3z" fill="#1b2230"/></svg><svg class="a" style="left:585px;top:58px" width="16" height="16" viewBox="0 0 16 16"><path d="M0.5 3.5h5l1 1h9v11h-15z" fill="#7fa6d8" stroke="#4a6a9a"/><rect x="0.5" y="5.5" width="15" height="9" fill="#050505"/><rect x="0.5" y="14" width="15" height="1.5" fill="#9aa2ae"/><path d="M8 6.5l-2 2M8 6.5l2 2M8 13.5l-2-2M8 13.5l2-2" stroke="#d02020"/></svg><svg class="a" style="left:606px;top:58px" width="16" height="16" viewBox="0 0 16 16"><rect x="3.5" y="3.5" width="12" height="11" fill="#fbfcfe" stroke="#1f3f88"/><rect x="4" y="4" width="11" height="2" fill="#3a6fd8"/><path d="M6 14l8-7" stroke="#c8d8f0" stroke-width="3"/><circle cx="4.5" cy="4.5" r="3.6" fill="#fff27a" opacity="0.9"/><path d="M4.5 0v9M0 4.5h9M1.3 1.3l6.4 6.4M7.7 1.3l-6.4 6.4" stroke="#f0d020" stroke-width="0.9"/></svg><svg class="a" style="left:629px;top:58px" width="16" height="16" viewBox="0 0 16 16"><rect x="0.5" y="1.5" width="10" height="8" fill="#e8ecf4" stroke="#6a7890"/><rect x="1" y="2" width="9" height="1.5" fill="#9fb0cc"/><rect x="5.5" y="6.5" width="10" height="8" fill="#fff" stroke="#1f3f88"/><rect x="6" y="7" width="9" height="1.5" fill="#3a6fd8"/><rect x="7.5" y="9.5" width="6" height="4" fill="#f0b020"/><path d="M7.5 13.5l2-2.5 2 1.5 2-2v3z" fill="#7a5010"/></svg><svg class="a" style="left:651px;top:58px" width="16" height="16" viewBox="0 0 16 16"><rect x="0.5" y="1.5" width="9" height="7" fill="#dcdfe4" stroke="#aab0b8"/><rect x="6.5" y="7.5" width="9" height="8" fill="#d4d8de" stroke="#9aa0a8"/><path d="M2 4h6M2 6h6M8 10h6M8 12h6" stroke="#b5bbc3"/></svg><svg class="a" style="left:673px;top:58px" width="16" height="16" viewBox="0 0 16 16"><rect x="0.5" y="1.5" width="15" height="13" fill="#e6e8ec" stroke="#a8aeb6"/><path d="M6 8V6.5a2.5 2.5 0 0 1 5 0V8" stroke="#8a9099" stroke-width="1.5" fill="none"/><rect x="5" y="8" width="7" height="6" fill="#8a9099"/></svg><svg class="a" style="left:694px;top:58px" width="16" height="16" viewBox="0 0 16 16"><circle cx="9.5" cy="8.5" r="5.5" fill="#f4f4f4" stroke="#9aa0a6"/><path d="M9.5 5v4h2.5" stroke="#4a4a4a" fill="none"/><path d="M1.5 8.5l2.5 2.5 4.5-6" stroke="#40b830" stroke-width="2.2" fill="none"/><circle cx="2" cy="1" r="0.8" fill="#222"/></svg><svg class="a" style="left:716px;top:58px" width="16" height="16" viewBox="0 0 16 16"><path d="M0 6.5h6l-3 3z" fill="#1b2230"/></svg><svg class="a" style="left:729px;top:58px" width="16" height="16" viewBox="0 0 16 16"><rect x="2.5" y="1.5" width="12" height="10" fill="#e0e3e8" stroke="#a0a6ae"/><rect x="5" y="4" width="7" height="5" fill="#b8bec6"/><path d="M7 15H3l-3-3 3-3h4z" fill="#c4c9d0" stroke="#9aa0a8"/></svg><svg class="a" style="left:750px;top:58px" width="16" height="16" viewBox="0 0 16 16"><rect x="0.5" y="1.5" width="12" height="10" fill="#e0e3e8" stroke="#a0a6ae"/><rect x="3" y="4" width="7" height="5" fill="#b8bec6"/><path d="M9 9h4l3 3-3 3H9z" fill="#c4c9d0" stroke="#9aa0a8"/></svg><svg class="a" style="left:771px;top:58px" width="16" height="16" viewBox="0 0 16 16"><path d="M0 6.5h6l-3 3z" fill="#8a93a0"/></svg><div class="sep" style="left:782.0px;top:57px"></div><svg class="a" style="left:789px;top:58px" width="16" height="16" viewBox="0 0 16 16"><rect x="0.5" y="1.5" width="15" height="13" fill="#fbfcfe" stroke="#1f3f88"/><rect x="1" y="2" width="14" height="2.5" fill="#3a6fd8"/><path d="M3 6.5h10M3 8.5h10M3 10.5h10M3 12.5h8" stroke="#333"/></svg><svg class="a" style="left:811px;top:58px" width="16" height="16" viewBox="0 0 16 16"><rect x="0.5" y="1.5" width="15" height="13" fill="#fbfcfe" stroke="#1f3f88"/><rect x="1" y="2" width="14" height="2.5" fill="#3a6fd8"/><circle cx="5" cy="7.5" r="1.8" fill="#e01010"/><circle cx="5" cy="11.5" r="1.8" fill="#1010d0"/><path d="M8 7.5h5M8 11.5h5" stroke="#555" stroke-width="1.2"/></svg><svg class="a" style="left:833px;top:58px" width="16" height="16" viewBox="0 0 16 16"><rect x="0.5" y="1.5" width="15" height="13" fill="#fbfcfe" stroke="#1f3f88"/><rect x="1" y="2" width="14" height="2.5" fill="#6a90d8"/><path d="M1 7.5h14M1 10.5h14M5 4.5v10M9 4.5v10M12 4.5v10" stroke="#c8ccd8"/><rect x="1" y="4.5" width="14" height="10" fill="#eef0f6" opacity="0.5"/></svg><svg class="a" style="left:854px;top:58px" width="16" height="16" viewBox="0 0 16 16"><path d="M0 6.5h6l-3 3z" fill="#1b2230"/></svg><svg class="a" style="left:866px;top:58px" width="16" height="16" viewBox="0 0 16 16"><rect x="0.5" y="1.5" width="15" height="13" fill="#fbfcfe" stroke="#1f3f88"/><rect x="1" y="2" width="14" height="2.5" fill="#3a6fd8"/><path d="M3 13l5-7 2 4M2.5 13h11M10 6l3 6" stroke="#111" stroke-width="1.1" fill="none"/></svg><div class="a" style="left:8px;top:637px;width:878px;height:26px;background:#bcc8d7"></div><div class="tb" style="left:9px;top:637px;width:696px;height:25px"></div><div class="tb" style="left:707px;top:637px;width:190px;height:25px"></div><div class="grip" style="left:14px;top:642px"></div><div class="grip" style="left:711px;top:642px"></div><div class="a" style="left:695px;top:638px;width:10px;height:23px;background:linear-gradient(180deg,#dde3eb,#cfd7e2);border-radius:0 3px 3px 0"></div><svg class="a" style="left:21px;top:642px" width="16" height="16" viewBox="0 0 16 16"><rect x="0.5" y="1.5" width="15" height="13" fill="#fbf8ee" stroke="#5a6a90"/><rect x="1" y="2" width="14" height="2" fill="#6a8ad8"/><path d="M4 9a4 4 0 0 1 7-2.5M12 9a4 4 0 0 1-7 2.5" stroke="#e2b82a" stroke-width="2" fill="none"/><path d="M11.5 4v3.5h-3.5zM4.5 14v-3.5h3.5z" fill="#e2b82a"/></svg><svg class="a" style="left:43px;top:642px" width="16" height="16" viewBox="0 0 16 16"><rect x="0.5" y="0.5" width="13" height="11" fill="#fff" stroke="#10205a" stroke-width="1.2"/><rect x="1" y="1" width="12" height="2" fill="#10205a"/><path d="M3 5h7M3 7h5M3 9h5" stroke="#222"/><path d="M8 10h4V8l4 3.5-4 3.5v-2H8z" fill="#38d8e8" stroke="#0a5a80" stroke-width="0.6"/></svg><svg class="a" style="left:65px;top:642px" width="16" height="16" viewBox="0 0 16 16"><path d="M7 6l8 9" stroke="#111" stroke-width="2.5"/><path d="M5 4l3 3" stroke="#e8d040" stroke-width="2.5"/><path d="M11 1l0.5 1.5M14 2.5l-1 1M13 0.5v1" stroke="#111"/><circle cx="3" cy="9" r="2.4" fill="#f0e020" stroke="#333" stroke-width="0.5"/><circle cx="7" cy="11" r="2.4" fill="#9a9a30" stroke="#333" stroke-width="0.5"/><circle cx="3" cy="14" r="2.2" fill="#f0e020" stroke="#333" stroke-width="0.5"/></svg><svg class="a" style="left:87px;top:642px" width="16" height="16" viewBox="0 0 16 16"><rect x="0.5" y="0.5" width="15" height="13" fill="#fff" stroke="#10205a" stroke-width="1.2"/><rect x="1" y="1" width="14" height="2" fill="#10205a"/><path d="M2 15l7-8" stroke="#5a2a10" stroke-width="2"/><path d="M6 5l3-2 5 5-2 2-3-3z" fill="#e8c828" stroke="#111" stroke-width="0.8"/></svg><svg class="a" style="left:108px;top:642px" width="16" height="16" viewBox="0 0 16 16"><path d="M0 6.5h6l-3 3z" fill="#1b2230"/></svg><div class="sep" style="left:119.0px;top:641px"></div><svg class="a" style="left:127px;top:642px" width="16" height="16" viewBox="0 0 16 16"><path d="M1 8l6-6 8 4-6 7z" fill="#e8e070" stroke="#111" stroke-width="1.2"/><path d="M7 2l8 4-2 3-8-4z" fill="#8a8a8a"/><path d="M1 8v3" stroke="#111" stroke-width="1.5"/></svg><svg class="a" style="left:148px;top:642px" width="16" height="16" viewBox="0 0 16 16"><path d="M0 3.5h5M2.5 1v5" stroke="#111" stroke-width="1.6"/><circle cx="11" cy="4.5" r="3.3" fill="#f4f020" stroke="#222" stroke-width="0.7"/><circle cx="4.5" cy="11.5" r="3.3" fill="#f4f020" stroke="#222" stroke-width="0.7"/><circle cx="11.5" cy="11.5" r="3.3" fill="#f4f020" stroke="#222" stroke-width="0.7"/></svg><svg class="a" style="left:170px;top:642px" width="16" height="16" viewBox="0 0 16 16"><path d="M0 8h6M3 5v6" stroke="#111" stroke-width="1.8"/><path d="M6 8h3" stroke="#111" stroke-width="1.5"/><circle cx="12" cy="8" r="3.6" fill="#f4f020" stroke="#222" stroke-width="0.7"/></svg><svg class="a" style="left:192px;top:642px" width="16" height="16" viewBox="0 0 16 16"><path d="M5 4a3 3 0 1 1 4 3v2" stroke="#111" stroke-width="1.6" fill="none"/><circle cx="3" cy="13" r="2.5" fill="#fff" stroke="#111" stroke-width="1.1"/><circle cx="13" cy="13" r="2.5" fill="#fff" stroke="#111" stroke-width="1.1"/><circle cx="9" cy="12" r="0.9" fill="#111"/></svg><svg class="a" style="left:214px;top:642px" width="16" height="16" viewBox="0 0 16 16"><rect x="2.5" y="2.5" width="11" height="11" fill="#c8d4f4" stroke="#1030c0" stroke-width="1.2"/><path d="M2.5 2.5l11 11M13.5 2.5l-11 11" stroke="#1030c0"/><circle cx="2.5" cy="2.5" r="2" fill="#fff" stroke="#111"/><circle cx="13.5" cy="2.5" r="2" fill="#fff" stroke="#111"/><circle cx="2.5" cy="13.5" r="2" fill="#fff" stroke="#111"/><circle cx="13.5" cy="13.5" r="2" fill="#fff" stroke="#111"/></svg><svg class="a" style="left:236px;top:642px" width="16" height="16" viewBox="0 0 16 16"><path d="M6.5 1h3v4h2.5L8 9 4 5h2.5z" fill="#fff" stroke="#9aa0a8"/><circle cx="4" cy="12.5" r="2.8" fill="none" stroke="#9aa0a8" stroke-width="1.2"/><circle cx="12" cy="12.5" r="2.8" fill="none" stroke="#9aa0a8" stroke-width="1.2"/></svg><svg class="a" style="left:258px;top:642px" width="16" height="16" viewBox="0 0 16 16"><circle cx="8" cy="8" r="6.5" fill="#fff" stroke="#111" stroke-width="1.2" stroke-dasharray="1.2 1.2"/><circle cx="8" cy="8" r="4.3" fill="#847a1a" stroke="#333" stroke-width="0.6"/></svg><svg class="a" style="left:279px;top:642px" width="16" height="16" viewBox="0 0 16 16"><path d="M0 6.5h6l-3 3z" fill="#1b2230"/></svg><div class="sep" style="left:290.0px;top:641px"></div><svg class="a" style="left:297px;top:642px" width="16" height="16" viewBox="0 0 16 16"><path d="M4.5 2.5h7l3.5 5.5-3.5 5.5h-7L1 8z" fill="none" stroke="#1030d0" stroke-width="2"/></svg><svg class="a" style="left:319px;top:642px" width="16" height="16" viewBox="0 0 16 16"><path d="M4.5 2.5h7l3.5 5.5-3.5 5.5" fill="none" stroke="#f0f040" stroke-width="2"/><path d="M11.5 13.5h-7L1 8l3.5-5.5" fill="none" stroke="#1030d0" stroke-width="2"/></svg><svg class="a" style="left:341px;top:642px" width="16" height="16" viewBox="0 0 16 16"><rect x="2.5" y="1.5" width="11" height="11" fill="none" stroke="#707070"/><path d="M4 4.5h6l2 2.5-2 2.5H4L2 7z" fill="none" stroke="#1030d0" stroke-width="1.3"/><path d="M6 9h6l2.5 3-2.5 3H6l-2.5-3z" fill="none" stroke="#1030d0" stroke-width="1.3"/></svg><svg class="a" style="left:363px;top:642px" width="16" height="16" viewBox="0 0 16 16"><path d="M1 2l6 5.5M7 2L1 7.5M9 2l6 5.5M15 2l-6 5.5M1 8.5l6 5.5M7 8.5l-6 5.5M9 8.5l6 5.5M15 8.5l-6 5.5" stroke="#1020c8" stroke-width="1.4"/><path d="M4 4.5l8 7M12 4.5l-8 7" stroke="#000" stroke-width="2"/></svg><svg class="a" style="left:385px;top:642px" width="16" height="16" viewBox="0 0 16 16"><path d="M1 2l6 5.5M7 2L1 7.5M9 2l6 5.5M15 2l-6 5.5M1 8.5l6 5.5M7 8.5l-6 5.5M9 8.5l6 5.5M15 8.5l-6 5.5" stroke="#d83a1a" stroke-width="1.4"/><path d="M4 4.5l8 7M12 4.5l-8 7" stroke="#000" stroke-width="2"/></svg><div class="sep" style="left:406.0px;top:641px"></div><svg class="a" style="left:412px;top:642px" width="16" height="16" viewBox="0 0 16 16"><path d="M4 12l8-8" stroke="#1a2a80" stroke-width="1.6"/><circle cx="12" cy="4" r="3.3" fill="#f4f020" stroke="#222" stroke-width="0.7"/><circle cx="4" cy="12" r="3" fill="#b8d8f8" stroke="#1a2a80" stroke-width="1"/></svg><svg class="a" style="left:435px;top:642px" width="16" height="16" viewBox="0 0 16 16"><path d="M5 6h6l2 2.5-2 2.5H5L3 8.5z" fill="none" stroke="#111" stroke-width="1.3"/><path d="M5 6L3 3M11 6l2-3M5 11l-2 3M11 11l2 3" stroke="#1830d0" stroke-width="1.8"/><path d="M1 3h4M11 3h4M1 14h4M11 14h4" stroke="#111" stroke-width="1.2"/><circle cx="2" cy="2.5" r="1.6" fill="#f4ec60"/><circle cx="14" cy="2.5" r="1.6" fill="#f4ec60"/><circle cx="2" cy="14.5" r="1.6" fill="#f4ec60"/><circle cx="14" cy="14.5" r="1.6" fill="#f4ec60"/></svg><svg class="a" style="left:457px;top:642px" width="16" height="16" viewBox="0 0 16 16"><path d="M6.5 2h5l2 3-2 3h-5l-2-3z" fill="none" stroke="#f0e850" stroke-width="1.5"/><path d="M3.5 9h5l2 3-2 3h-5l-2-3z" fill="none" stroke="#111" stroke-width="1.5"/></svg><svg class="a" style="left:480px;top:642px" width="16" height="16" viewBox="0 0 16 16"><path d="M6 1h5l2 3-2 3H6L4 4z" fill="none" stroke="#8a9099" stroke-width="1.3"/><path d="M3 8.5h5l2 3-2 3H3l-2-3z" fill="none" stroke="#8a9099" stroke-width="1.3"/></svg><div class="sep" style="left:500.0px;top:641px"></div><svg class="a" style="left:507px;top:642px" width="16" height="16" viewBox="0 0 16 16"><rect x="1.5" y="4.5" width="10" height="10" fill="#dde4ff" stroke="#1030c0" stroke-width="1.4"/><rect x="4.5" y="1.5" width="10" height="10" fill="none" stroke="#1030c0" stroke-width="1.4"/><path d="M1.5 4.5l3-3M11.5 4.5l3-3M11.5 14.5l3-3M1.5 14.5l3-3" stroke="#1030c0" stroke-width="1.2"/><rect x="4.5" y="4.5" width="7" height="7" fill="none" stroke="#000" stroke-width="1.2"/></svg><svg class="a" style="left:530px;top:642px" width="16" height="16" viewBox="0 0 16 16"><path d="M8 1l7 7-7 7-7-7z" fill="none" stroke="#9aa0a8" stroke-width="1.2"/><path d="M1 8h14M8 1v14M4 8l4 7 4-7" stroke="#9aa0a8" stroke-width="0.8" fill="none"/></svg><svg class="a" style="left:551px;top:642px" width="16" height="16" viewBox="0 0 16 16"><circle cx="3" cy="5" r="2" fill="#e8d040"/><circle cx="8" cy="4" r="2" fill="#e8d040"/><circle cx="13" cy="5" r="2" fill="#e8d040"/><path d="M1 5h14M3 5l3 4M8 4l2 5" stroke="#111" stroke-width="1.3"/><path d="M1 6l14 8M15 3L2 14" stroke="#e01010" stroke-width="2.6"/><circle cx="4" cy="10" r="1.6" fill="#e8d040"/></svg><svg class="a" style="left:572px;top:642px" width="16" height="16" viewBox="0 0 16 16"><path d="M0 6.5h6l-3 3z" fill="#1b2230"/></svg><svg class="a" style="left:584px;top:642px" width="16" height="16" viewBox="0 0 16 16"><circle cx="4.5" cy="11.5" r="3.5" fill="#fff" stroke="#888" stroke-width="1.2"/><text x="7" y="7" font-family="Liberation Sans" font-weight="bold" font-size="8" fill="#8a8a8a">Fe</text></svg><div class="sep" style="left:605.0px;top:641px"></div><svg class="a" style="left:612px;top:642px" width="16" height="16" viewBox="0 0 16 16"><rect x="0.5" y="0.5" width="15" height="15" fill="#c8d4f8" stroke="#1030c0" stroke-width="1.2"/><path d="M8 1.5l3 3H9v2.5h2.5V5l3 3-3 3V9H9v2.5h2L8 14.5l-3-3h2V9H4.5v2l-3-3 3-3v2H7V4.5H5z" fill="#000"/><circle cx="8" cy="8" r="2.3" fill="#f4f020"/></svg><svg class="a" style="left:633px;top:642px" width="16" height="16" viewBox="0 0 16 16"><path d="M0 6.5h6l-3 3z" fill="#1b2230"/></svg><div class="sep" style="left:644.0px;top:641px"></div><svg class="a" style="left:652px;top:642px" width="16" height="16" viewBox="0 0 16 16"><text x="0" y="13.5" font-family="Liberation Serif" font-weight="bold" font-style="italic" font-size="15" fill="#1a2aa8">M</text></svg><svg class="a" style="left:673px;top:642px" width="16" height="16" viewBox="0 0 16 16"><rect x="0.5" y="0.5" width="15" height="14" fill="#f2f4f8" stroke="#10205a" stroke-width="1.3"/><circle cx="6" cy="6" r="3.5" fill="none" stroke="#e02020" stroke-width="1.3"/><circle cx="9.5" cy="9" r="4" fill="#108a7a"/></svg><svg class="a" style="left:697px;top:653px" width="8" height="8" viewBox="0 0 8 8"><rect x="0" y="0" width="6" height="1.5" fill="#111"/><path d="M0 3h6l-3 3.5z" fill="#111"/></svg><div class="a" style="left:715px;top:640px;width:22px;height:21px;background:linear-gradient(180deg,#fff3d6,#fde4b0);border:1px solid #e8c888;border-radius:2px"></div><svg class="a" style="left:720px;top:642px" width="16" height="16" viewBox="0 0 16 16"><path d="M3 1v13l3-3 2.5 5 2-1-2.5-5h4.5z" fill="#fff" stroke="#111" stroke-width="1.1"/></svg><svg class="a" style="left:740px;top:642px" width="16" height="16" viewBox="0 0 16 16"><path d="M8 0l3 3.5H9v3.5h3.5V5l3.5 3-3.5 3V9H9v3.5h2L8 16l-3-3.5h2V9H3.5v2L0 8l3.5-3v2H7V3.5H5z" fill="#111"/><circle cx="8" cy="8" r="2.6" fill="none" stroke="#111" stroke-width="1.6"/></svg><svg class="a" style="left:763px;top:642px" width="16" height="16" viewBox="0 0 16 16"><path d="M12.5 6.5A5 5 0 1 1 9 3" stroke="#111" stroke-width="2.2" fill="none"/><path d="M8 0l5 3-5 3z" fill="#111"/></svg><svg class="a" style="left:784px;top:642px" width="16" height="16" viewBox="0 0 16 16"><path d="M8 0l3.5 4H9.3v2.7H12V4.5L16 8l-4 3.5V9.3H9.3V12h2.2L8 16l-3.5-4h2.2V9.3H4v2.2L0 8l4-3.5v2.2h2.7V4H4.5z" fill="#111"/></svg><svg class="a" style="left:806px;top:642px" width="16" height="16" viewBox="0 0 16 16"><path d="M1 5V1h4M11 1h4v4M15 11v4h-4M5 15H1v-4" stroke="#111" stroke-width="1.5" fill="none"/><path d="M2 2l3 3M14 2l-3 3M14 14l-3-3M2 14l3-3" stroke="#111" stroke-width="1.2"/><circle cx="8" cy="8" r="3" fill="none" stroke="#111" stroke-width="1.5"/></svg><svg class="a" style="left:827px;top:642px" width="16" height="16" viewBox="0 0 16 16"><path d="M15 2L1 8l14 6" stroke="#111" stroke-width="1.8" fill="none"/><path d="M12 5v6" stroke="#111" stroke-width="1.5" stroke-dasharray="2 1"/></svg><svg class="a" style="left:849px;top:642px" width="16" height="16" viewBox="0 0 16 16"><path d="M8 1L1 8h3v6h8V8h3z" fill="none" stroke="#111" stroke-width="1.6"/><path d="M5 10h6M6 12.5h4" stroke="#111" stroke-width="1.4"/><path d="M0 15h16" stroke="#111" stroke-width="1.6"/></svg><svg class="a" style="left:872px;top:642px" width="16" height="16" viewBox="0 0 16 16"><circle cx="8" cy="8" r="6.5" fill="none" stroke="#111" stroke-width="1.5" stroke-dasharray="2 1.5"/><circle cx="8" cy="8" r="3" fill="none" stroke="#111" stroke-width="1.4"/></svg><svg class="a" style="left:7px;top:6px" width="16" height="16" viewBox="0 0 16 16"><path d="M1.5 5.5l3.5-3.5h8l3.5 3.5L9 13.5z" fill="#c8d4fa" stroke="#f4f8ff" stroke-width="1"/><path d="M5 3l2 3-1 5M9 3l-1.5 3 1.5 6M12 3l-2 3 1 4" stroke="#2a40c8" stroke-width="1.6" fill="none" opacity="0.85"/><path d="M3 6h12" stroke="#8aa0f0" stroke-width="0.8"/></svg><svg class="a" style="left:19px;top:33px" width="16" height="16" viewBox="0 0 16 16"><path d="M3.5 1.5h7l3 3v9h-10z" fill="#fffef0" stroke="#1a1a1a"/><circle cx="5.5" cy="6" r="4" fill="#fff65a" opacity="0.9"/><path d="M5.5 1.5v9M1 6h9M2.3 2.8l6.4 6.4M8.7 2.8l-6.4 6.4" stroke="#f0e040" stroke-width="0.8"/><path d="M9 8.5l5 3.5-5 3.5z" fill="#111"/><circle cx="7.5" cy="12" r="2.6" fill="#30b0a0"/><path d="M6 11.5h3M7.5 10v4" stroke="#80e070" stroke-width="0.8"/></svg><div class="t" style="left:42px;top:35px;font-size:12px;color:#111;text-underline-offset:1px"><u>F</u>ile</div><div class="t" style="left:76px;top:35px;font-size:12px;color:#111;text-underline-offset:1px"><u>E</u>dit</div><div class="t" style="left:111.5px;top:35px;font-size:12px;color:#111;text-underline-offset:1px"><u>V</u>iew</div><div class="t" style="left:153.3px;top:35px;font-size:12px;color:#111;text-underline-offset:1px"><u>S</u>tructure</div><div class="t" style="left:217px;top:35px;font-size:12px;color:#111;text-underline-offset:1px"><u>P</u>icture</div><div class="t" style="left:270.2px;top:35px;font-size:12px;color:#111;text-underline-offset:1px"><u>B</u>uild</div><div class="t" style="left:313.2px;top:35px;font-size:12px;color:#111;text-underline-offset:1px"><u>O</u>bjects</div><div class="t" style="left:369px;top:35px;font-size:12px;color:#111;text-underline-offset:1px"><u>M</u>ove</div><div class="t" style="left:415px;top:35px;font-size:12px;color:#111;text-underline-offset:1px"><u>T</u>ools</div><div class="t" style="left:459.8px;top:35px;font-size:12px;color:#111;text-underline-offset:1px"><u>W</u>indow</div><div class="t" style="left:520px;top:35px;font-size:12px;color:#111;text-underline-offset:1px"><u>H</u>elp</div><div class="grip" style="left:14px;top:33px"></div><div class="a" style="left:348px;top:79px;width:1px;height:558px;background:#f8f8f8"></div><div class="a" style="left:349px;top:80px;width:537px;height:23px;background:#f4f4f4;border-top:1px solid #a3a3a3;border-left:1px solid #a3a3a3"></div><div class="a" style="left:349px;top:103px;width:537px;height:5px;background:#efefef;border-top:1px solid #fbfbfb"></div><div class="a" style="left:349px;top:108px;width:532px;height:28px;background:#f0f0f0;border-top:1px solid #9a9a9a;border-left:1px solid #a8a8a8;border-right:1px solid #c8c8c8"></div><div class="a" style="left:349px;top:133px;width:532px;height:1px;background:#9a9a9a"></div><div class="a" style="left:349px;top:134px;width:532px;height:2px;background:#fcfcfc"></div><div class="a" style="left:374px;top:111px;width:102px;height:24px;background:linear-gradient(180deg,#bcd7f5,#dcebfa 55%,#fdfeff);border:1px solid #8c8c8c;border-bottom:none;box-shadow:inset 1px 1px 0 #fff"></div><div class="t" style="left:402px;top:118px;font-size:12px;color:#111;transform-origin:0 0;transform:scaleX(0.8868);">Picture 1</div><div class="a" style="left:481px;top:113px;width:38px;height:20px;background:linear-gradient(180deg,#f6f6f6,#d9d9d9);border:1px solid #8e8e8e;border-bottom:none;box-shadow:inset 1px 1px 0 #fff,inset -1px 0 0 #fff"></div><div class="a" style="left:503px;top:116px;width:1px;height:17px;background:#fafafa"></div><svg class="a" style="left:355px;top:119px" width="11" height="9"><rect x="0" y="0" width="4" height="3" fill="#777"/><rect x="6" y="0" width="4" height="3" fill="#777"/><rect x="0" y="5" width="4" height="3" fill="#777"/><rect x="6" y="5" width="4" height="3" fill="#777"/></svg><svg class="a" style="left:484px;top:116px" width="34" height="16"><rect x="2.5" y="2.5" width="13" height="11" rx="0.5" fill="#f2f6fc" stroke="#1f3060"/><rect x="3" y="3" width="12" height="2" fill="#4a78d0"/><circle cx="4.5" cy="3.5" r="3.3" fill="#fff36a" opacity="0.85"/><path d="M4.5 0v7M1 3.5h7M2 1l5 5M7 1l-5 5" stroke="#e8d030" stroke-width="0.8"/><path d="M25 6h5l-2.5 3z" fill="#8a8a8a"/></svg><svg class="a" style="left:866px;top:118px" width="14" height="10"><path d="M1 1l4 4-4 4M6 1l4 4-4 4" stroke="#808080" stroke-width="2" fill="none"/></svg><div class="t" style="left:400px;top:86px;font-size:12px;color:#8a8a8a;transform-origin:0 0;transform:scaleX(0.9900);">No.</div><div class="t" style="left:421px;top:86px;font-size:12px;color:#000;transform-origin:0 0;transform:scaleX(0.8972);">1</div><div class="t" style="left:440.5px;top:86px;font-size:12px;color:#8a8a8a;transform-origin:0 0;transform:scaleX(1.0119);">Title</div><div class="t" style="left:465px;top:86px;font-size:12px;color:#000;transform-origin:0 0;transform:scaleX(0.8990);">9002801</div><div class="t" style="left:520px;top:86px;font-size:12px;color:#8a8a8a;transform-origin:0 0;transform:scaleX(0.9263);">Pics</div><div class="t" style="left:543px;top:86px;font-size:12px;color:#000;transform-origin:0 0;transform:scaleX(0.8972);">1</div><div class="t" style="left:562.2px;top:86px;font-size:12px;color:#8a8a8a;transform-origin:0 0;transform:scaleX(0.9760);">Code</div><div class="t" style="left:592.3px;top:86px;font-size:12px;color:#000;transform-origin:0 0;transform:scaleX(0.8904);">9002801</div><div class="t" style="left:646.8px;top:86px;font-size:12px;color:#8a8a8a;transform-origin:0 0;transform:scaleX(0.9998);">Formula sum</div><div class="t" style="left:719.5px;top:86px;font-size:12px;color:#000;transform-origin:0 0;transform:scaleX(0.9607);">Ca O3 Ti</div><div class="t" style="left:777.4px;top:86px;font-size:12px;color:#8a8a8a;transform-origin:0 0;transform:scaleX(1.0264);">HM symbol</div><div class="t" style="left:842.2px;top:86px;font-size:12px;color:#000;transform-origin:0 0;transform:scaleX(0.9893);">P b n m</div><svg class="a" style="left:352px;top:84px" width="32" height="16"><path d="M4 4l8 8M12 4l-8 8" stroke="#7a7a7a" stroke-width="2.2"/><path d="M24 5l7 7M31 7v5h-5" stroke="#7a7a7a" stroke-width="1.8" fill="none"/></svg><div class="a" style="left:349px;top:609px;width:532px;height:28px;background:#f0f0f0;border-top:2px solid #fafafa"></div><div class="a" style="left:350px;top:612px;width:15px;height:23px;border:1px solid #a8a8a8;background:#f0f0f0"></div><svg class="a" style="left:351px;top:614px" width="13" height="19"><path d="M2 8l4.5-5 4.5 5z" fill="#8a8a8a"/><path d="M2 11l4.5 5 4.5-5z" fill="#8a8a8a"/></svg><div class="a" style="left:367px;top:612px;width:22px;height:23px;border:1px solid #a8a8a8;background:#f0f0f0"></div><svg class="a" style="left:372px;top:619px" width="12" height="9"><rect x="0.5" y="0.5" width="11" height="8" fill="#f6f6f6" stroke="#8a8a8a"/><path d="M0 4.5h12M4.2 0v9M7.8 0v9" stroke="#8a8a8a"/></svg><div class="a" style="left:391px;top:612px;width:490px;height:23px;border:1px solid #a8a8a8;border-right:none;background:#f0f0f0"></div><div class="a" style="left:513px;top:610px;width:360px;height:27px;background:#fff8e8;border:1px solid #d6c79c"></div><div class="t" style="left:517px;top:616px;font-size:12px;color:#1a1a1a;transform-origin:0 0;transform:scaleX(0.9944);">Auto Picture Creator has created a structure picture automatically.</div><div class="a" style="left:829.5px;top:539.5px;width:51px;height:69px;border:1px solid #fff;background:#000"></div><svg class="a" style="left:828px;top:538px" width="54" height="72"><circle cx="12" cy="12.7" r="8.6" fill="url(#gC2)"/><circle cx="12" cy="35.8" r="8.6" fill="url(#gT2)"/><circle cx="12" cy="58.8" r="8.6" fill="url(#gO2)"/></svg><div class="t" style="left:850px;top:545px;font-size:12px;color:#fff;">Ca+2</div><div class="t" style="left:850px;top:568px;font-size:12px;color:#fff;">Ti+4</div><div class="t" style="left:850px;top:591px;font-size:12px;color:#fff;">O-2</div><div class="t" style="left:11px;top:668px;font-size:12px;color:#fff;transform-origin:0 0;transform:scaleX(0.9467);">Success. 176 atoms created.</div><div class="a" style="left:617.5px;top:665px;width:1px;height:17px;background:#a9b4c6"></div><div class="a" style="left:720.5px;top:665px;width:1px;height:17px;background:#a9b4c6"></div><div class="a" style="left:747.5px;top:665px;width:1px;height:17px;background:#a9b4c6"></div><div class="a" style="left:775px;top:665px;width:1px;height:17px;background:#a9b4c6"></div><div class="a" style="left:803px;top:665px;width:1px;height:17px;background:#a9b4c6"></div><div class="a" style="left:781px;top:664px;width:22px;height:19px;overflow:hidden"><div class="t" style="left:0.5px;top:4px;font-size:12px;color:#fff">APC</div></div><div class="a" style="left:807px;top:665px;width:79px;height:17px;background:#fdd49c"></div><div class="t" style="left:811px;top:668px;font-size:12px;color:#000;">Auto Picture</div><div class="t" style="left:30px;top:8px;font-size:12px;color:#000;transform-origin:0 0;transform:scaleX(0.9963);text-shadow:0 0 6px rgba(255,255,255,0.9),0 0 3px rgba(255,255,255,0.8)">Diamond - [COD-9002801.cif]</div>
</body></html>
